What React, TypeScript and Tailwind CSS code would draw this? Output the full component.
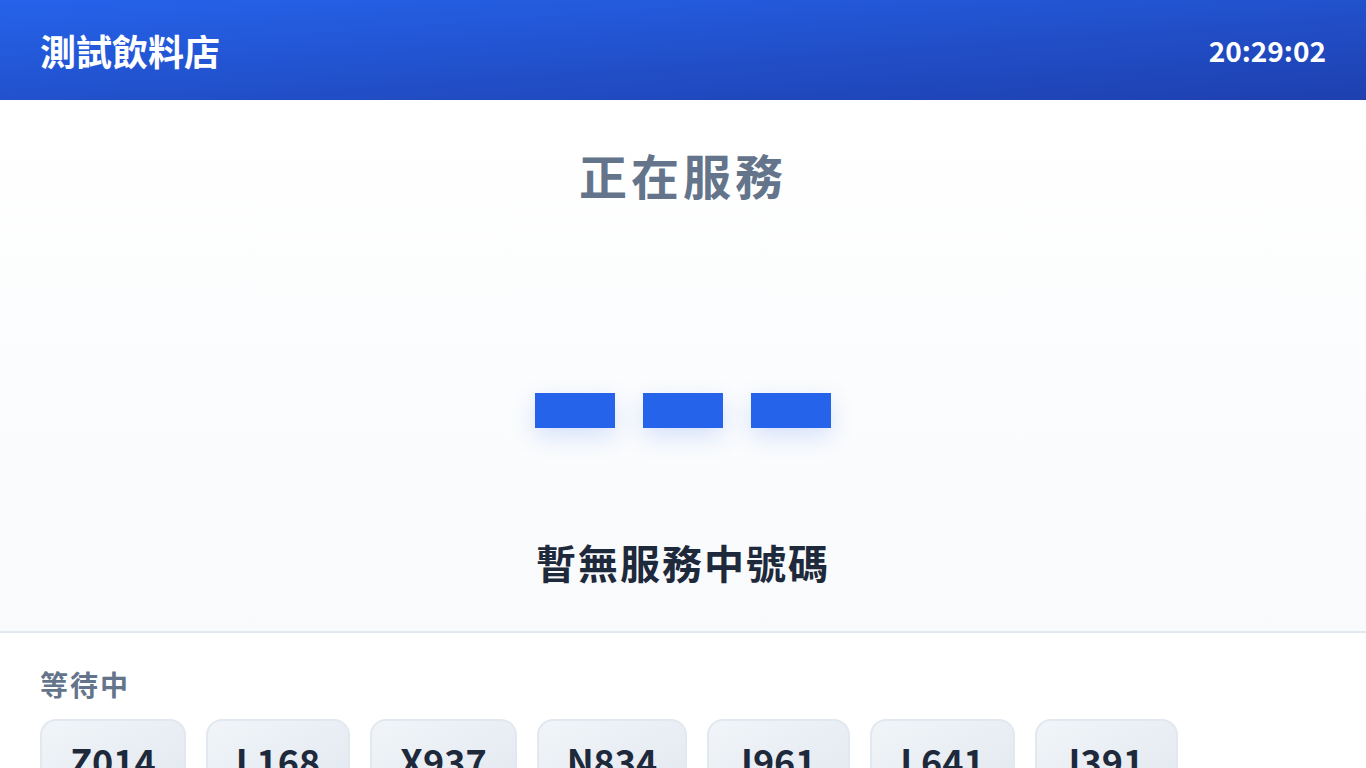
import React from 'react';

const waiting = ['Z014', 'L168', 'X937', 'N834', 'I961', 'L641', 'I391'];

const App: React.FC = () => {
  const now = '20:29:02';

  return (
    <div
      className="min-h-screen bg-white flex flex-col"
      style={{ fontFamily: '"Noto Sans CJK TC", "Noto Sans", sans-serif' }}
    >
      {/* Header */}
      <header className="h-[100px] shrink-0 flex items-center justify-between px-10 bg-gradient-to-br from-[#2563eb] to-[#1e40af]">
        <h1 className="text-[36px] font-bold text-white leading-none">測試飲料店</h1>
        <div className="text-[28px] font-bold text-white leading-none">{now}</div>
      </header>

      {/* Now serving */}
      <main className="h-[533px] shrink-0 flex flex-col items-center bg-gradient-to-b from-white to-[#f8fafc] border-b-2 border-[#e2e8f0]">
        <h2 className="mt-[46px] h-[56px] flex items-center text-[48px] font-bold tracking-[4px] text-[#64748b] leading-none">
          正在服務
        </h2>
        <div className="mt-[191px] h-[35px] flex gap-[28px]" aria-label="---">
          <div className="w-[80px] h-[35px] bg-[#2563eb] shadow-[0_8px_24px_rgba(37,99,235,0.18)]" />
          <div className="w-[80px] h-[35px] bg-[#2563eb] shadow-[0_8px_24px_rgba(37,99,235,0.18)]" />
          <div className="w-[80px] h-[35px] bg-[#2563eb] shadow-[0_8px_24px_rgba(37,99,235,0.18)]" />
        </div>
        <p className="mt-[110px] h-[48px] flex items-center text-[40px] font-bold tracking-[2px] text-[#1e293b] leading-none">
          暫無服務中號碼
        </p>
      </main>

      {/* Waiting queue */}
      <section className="px-10 pt-[35px]">
        <h3 className="h-[32px] flex items-center text-[28px] font-bold tracking-[2px] text-[#64748b] leading-none">
          等待中
        </h3>
        <div className="mt-[19px] flex gap-5">
          {waiting.map((n) => (
            <div
              key={n}
              className="min-w-[143px] px-7 pt-[21px] pb-4 text-center rounded-2xl border-2 border-[#e2e8f0] bg-gradient-to-br from-[#f1f5f9] to-[#e2e8f0]"
            >
              <span className="text-[36px] font-bold text-[#1e293b] leading-none">{n}</span>
            </div>
          ))}
        </div>
      </section>
    </div>
  );
};

export default App;
